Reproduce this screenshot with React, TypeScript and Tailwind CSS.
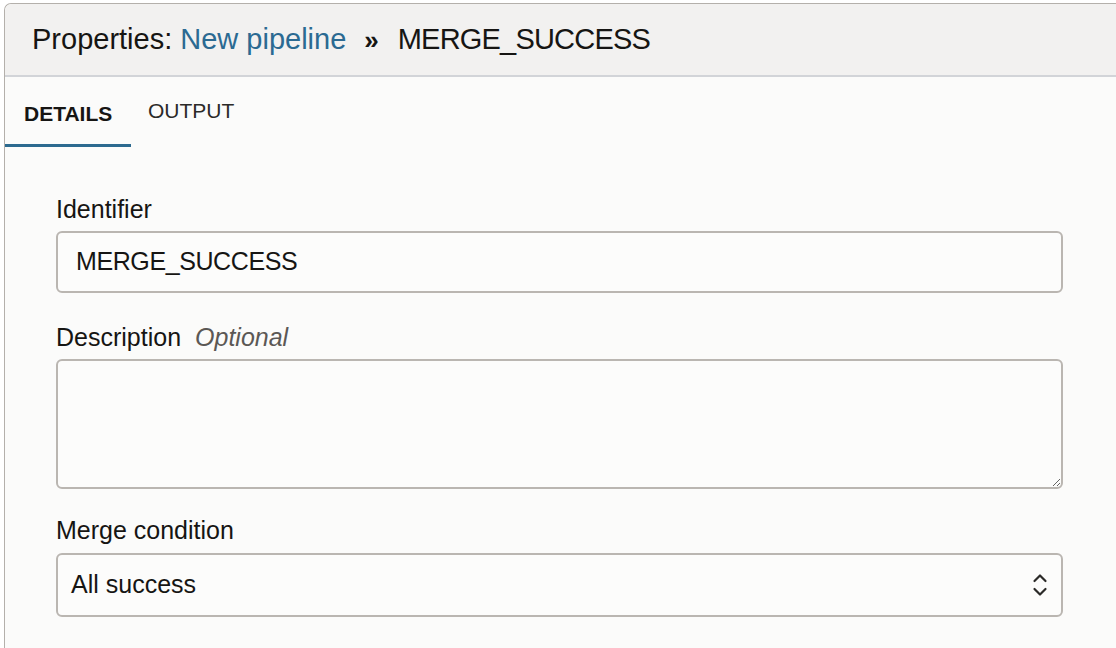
export default function App() {
  return (
    <div className="h-[648px] w-[1116px] overflow-hidden bg-white font-['Liberation_Sans',Arial,sans-serif] text-[#161513]">
      <div className="ml-[4px] mt-[3px] h-[660px] w-[1130px] rounded-tl-[7px] border-l border-t border-[#b4b0ab] bg-[#fbfbfa]">
        {/* Header */}
        <div className="flex h-[73px] items-center rounded-tl-[7px] border-b-2 border-[#d2d4d8] bg-[#f2f1f0] pl-[27px] text-[29px] leading-none">
          <span>Properties:</span>
          <span className="ml-[8px] text-[#2b6a92]">New pipeline</span>
          <span className="ml-[18px] text-[26px] font-bold">»</span>
          <span className="ml-[19px] tracking-[-0.8px]">MERGE_SUCCESS</span>
        </div>

        {/* Tabs */}
        <div className="flex h-[70px] items-stretch">
          <div className="flex w-[126px] flex-col justify-end border-b-[3px] border-[#2c6a8f] pb-[20px] pl-[19px]">
            <span className="text-[21px] font-bold leading-none">DETAILS</span>
          </div>
          <div className="flex flex-col justify-end pb-[26px] pl-[17px]">
            <span className="text-[21px] leading-none text-[#2b2a28]">OUTPUT</span>
          </div>
        </div>

        {/* Form */}
        <div className="flex w-[1058px] flex-col pl-[51px] pt-[50px]">
          <label className="text-[25px] leading-none">Identifier</label>
          <div className="mt-[9px] flex h-[62px] items-center rounded-[6px] border-2 border-[#bab6b1] bg-[#fcfcfb] pl-[18px] text-[25px] tracking-[-0.4px]">
            MERGE_SUCCESS
          </div>

          <label className="mt-[32px] flex items-baseline text-[25px] leading-none">
            Description
            <span className="ml-[14px] italic text-[#5b5855]">Optional</span>
          </label>
          <textarea className="mt-[9px] h-[130px] resize-y rounded-[6px] border-2 border-[#bab6b1] bg-[#fcfcfb] outline-none" />

          <label className="mt-[29px] text-[25px] leading-none">Merge condition</label>
          <div className="mt-[10px] flex h-[64px] items-center justify-between rounded-[6px] border-2 border-[#bab6b1] bg-[#fcfcfb] pl-[13px] pr-[13px] text-[25px]">
            <span>All success</span>
            <svg width="16" height="28" viewBox="0 0 16 28" fill="none" stroke="#2b2a28" strokeWidth="2.2" strokeLinecap="round" strokeLinejoin="round">
              <path d="M2.5 10 L8 4.5 L13.5 10" />
              <path d="M2.5 18 L8 23.5 L13.5 18" />
            </svg>
          </div>
        </div>
      </div>
    </div>
  );
}
